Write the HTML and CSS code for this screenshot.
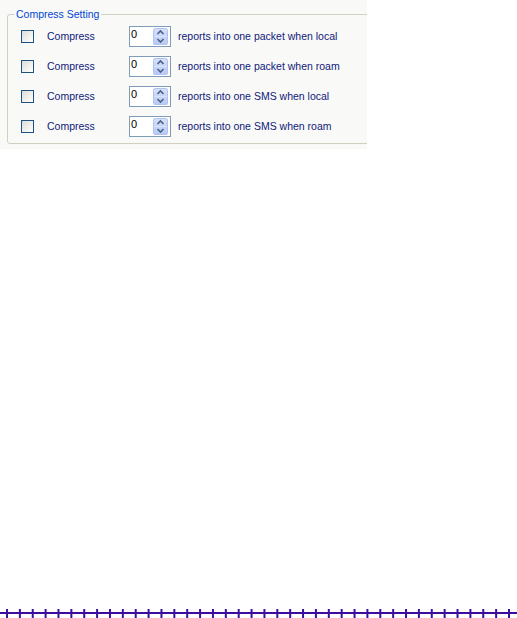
FILE: index.html
```html
<!DOCTYPE html>
<html lang="en">
<head>
  <meta charset="UTF-8">
  <title>Compress Setting</title>
  <link rel="stylesheet" href="styles.css">
</head>
<body>
  <div class="panel">
    <fieldset class="group">
      <legend>Compress Setting</legend>

      <div class="row">
        <span class="check"></span>
        <span class="label">Compress</span>
        <span class="spin"><span class="value">0</span><span class="arrows"></span></span>
        <span class="desc">reports into one packet when local</span>
      </div>
      <div class="row">
        <span class="check"></span>
        <span class="label">Compress</span>
        <span class="spin"><span class="value">0</span><span class="arrows"></span></span>
        <span class="desc">reports into one packet when roam</span>
      </div>
      <div class="row">
        <span class="check"></span>
        <span class="label">Compress</span>
        <span class="spin"><span class="value">0</span><span class="arrows"></span></span>
        <span class="desc">reports into one SMS when local</span>
      </div>
      <div class="row">
        <span class="check"></span>
        <span class="label">Compress</span>
        <span class="spin"><span class="value">0</span><span class="arrows"></span></span>
        <span class="desc">reports into one SMS when roam</span>
      </div>
    </fieldset>
  </div>

  <!-- timeline ruler at the bottom -->
  <svg class="ruler" width="517" height="9" viewBox="0 0 517 9">
    <defs>
      <pattern id="ticks" x="6" y="0" width="12.872" height="9" patternUnits="userSpaceOnUse">
        <rect width="2" height="9" fill="#3b0f9c"/>
      </pattern>
    </defs>
    <rect x="0" y="0" width="517" height="9" fill="url(#ticks)"/>
    <rect x="0" y="3" width="517" height="2" fill="#3b0f9c"/>
  </svg>
</body>
</html>
```

FILE: styles.css
```css
body {
  margin: 0;
  height: 618px;
  display: flex;
  flex-direction: column;
  background: #ffffff;
  font-family: "Liberation Sans", Arial, sans-serif;
  font-size: 10.5px;
  overflow: hidden;
}

.panel {
  width: 367px;
  height: 149px;
  box-sizing: border-box;
  padding-top: 8px;
  background: #f9f9f8;
  overflow: hidden;
}

.group {
  margin: 0 0 0 7px;
  padding: 0 0 2px 0;
  width: 380px;
  box-sizing: border-box;
  border: 1px solid #d0d0bf;
  border-radius: 3px;
}

.group legend {
  margin-left: 6px;
  padding: 0 2px;
  line-height: 13px;
  color: #0046d5;
}

.row {
  display: flex;
  align-items: center;
  height: 30px;
}

.check {
  width: 11px;
  height: 11px;
  margin-left: 13px;
  border: 1px solid #1c5180;
  background: linear-gradient(135deg, #dcdcd7, #ffffff);
}

.label {
  width: 82px;
  margin-left: 13px;
  color: #10207a;
}

.spin {
  width: 42px;
  height: 21px;
  box-sizing: border-box;
  border: 1px solid #7f9db9;
  background: #ffffff;
  display: flex;
  align-items: center;
  justify-content: space-between;
  padding: 1px 2px 1px 1px;
}

.spin .value {
  font-size: 11px;
  color: #000000;
  line-height: 13px;
  margin-top: -4px;
}

.arrows {
  width: 15px;
  height: 17px;
  border-radius: 2px;
  background-color: #c3d3f8;
  background-image:
    url("data:image/svg+xml;utf8,<svg xmlns='http://www.w3.org/2000/svg' width='15' height='17'><rect x='0.5' y='0.5' width='14' height='16' rx='2' fill='none' stroke='%23b1c4ef'/><line x1='1' y1='8.5' x2='14' y2='8.5' stroke='%23dbe4fa'/><polyline points='4.5,6 7.5,3 10.5,6' fill='none' stroke='%234d6185' stroke-width='1.6'/><polyline points='4.5,11 7.5,14 10.5,11' fill='none' stroke='%234d6185' stroke-width='1.6'/></svg>"),
    linear-gradient(#d6e1fb, #b6c9f5);
}

.desc {
  margin-left: 7px;
  color: #10207a;
}

.ruler {
  display: block;
  margin-top: auto;
}
```
